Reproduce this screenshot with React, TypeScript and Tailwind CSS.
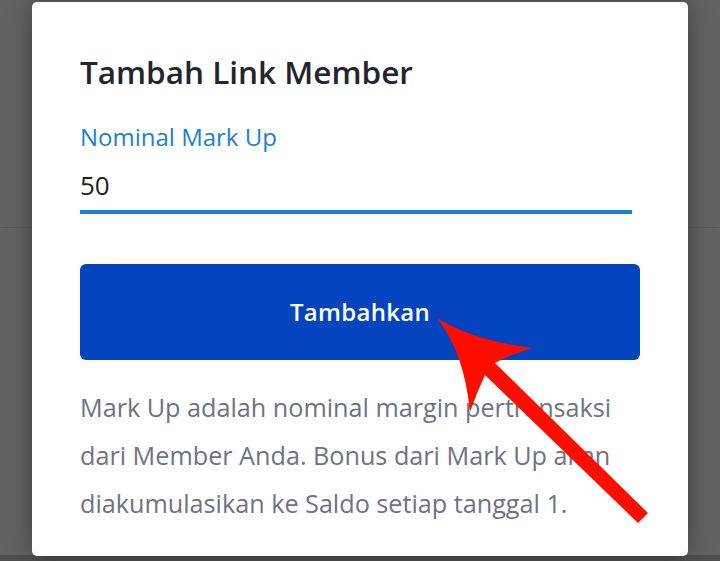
import React from 'react';

const Arrow: React.FC = () => (
    <svg className="pointer-events-none absolute left-0 top-0" width="720" height="561" viewBox="0 0 720 561">
        <path
            d="M437,318 Q472,340 532,348 Q507,356 495,363 L648,513 L638,523 L485,375 Q477,392 470,412 Q464,352 437,318 Z"
            fill="#ff0d00"
        />
    </svg>
);

const App: React.FC = () => {
    return (
        <div className="relative h-[561px] w-[720px] overflow-hidden bg-[#626262]" style={{ fontFamily: '"Open Sans", sans-serif' }}>
            {/* page behind the overlay */}
            <div className="h-[228px] border-b border-[#585858]" />
            <div className="absolute bottom-0 left-0 h-[6px] w-full bg-[#4f4f4f]" />

            {/* dialog */}
            <div className="absolute left-[32px] top-[2px] flex h-[554px] w-[656px] flex-col rounded-[5px] bg-white px-[48px] pt-[50px] shadow-[0_0_24px_rgba(0,0,0,0.35)]">
                <h2 className="text-[31.5px] font-semibold leading-[40px] text-[#24242f]">
                    Tambah Link Member
                </h2>

                <div className="mt-[30px] flex w-[552px] flex-col">
                    <label className="text-[24px] leading-[30px] text-[#1b7fd8]">
                        Nominal Mark Up
                    </label>
                    <input
                        type="text"
                        defaultValue="50"
                        className="mt-[16px] h-[34px] bg-transparent p-0 text-[26px] leading-[34px] text-[#222222] outline-none"
                    />
                    <div className="mt-[8px] h-[4px] bg-[#1b7fd8]" />
                </div>

                <button className="mt-[50px] h-[96px] w-[560px] rounded-[6px] bg-[#0444bf] text-[24px] font-semibold tracking-[0.3px] text-white">
                    Tambahkan
                </button>

                <p className="mt-[23px] w-[560px] text-[25.2px] leading-[48px] text-[#6e7283]">
                    Mark Up adalah nominal margin pertransaksi dari Member Anda. Bonus dari Mark Up akan diakumulasikan ke Saldo setiap tanggal 1.
                </p>
            </div>

            <Arrow />
        </div>
    );
};

export default App;
